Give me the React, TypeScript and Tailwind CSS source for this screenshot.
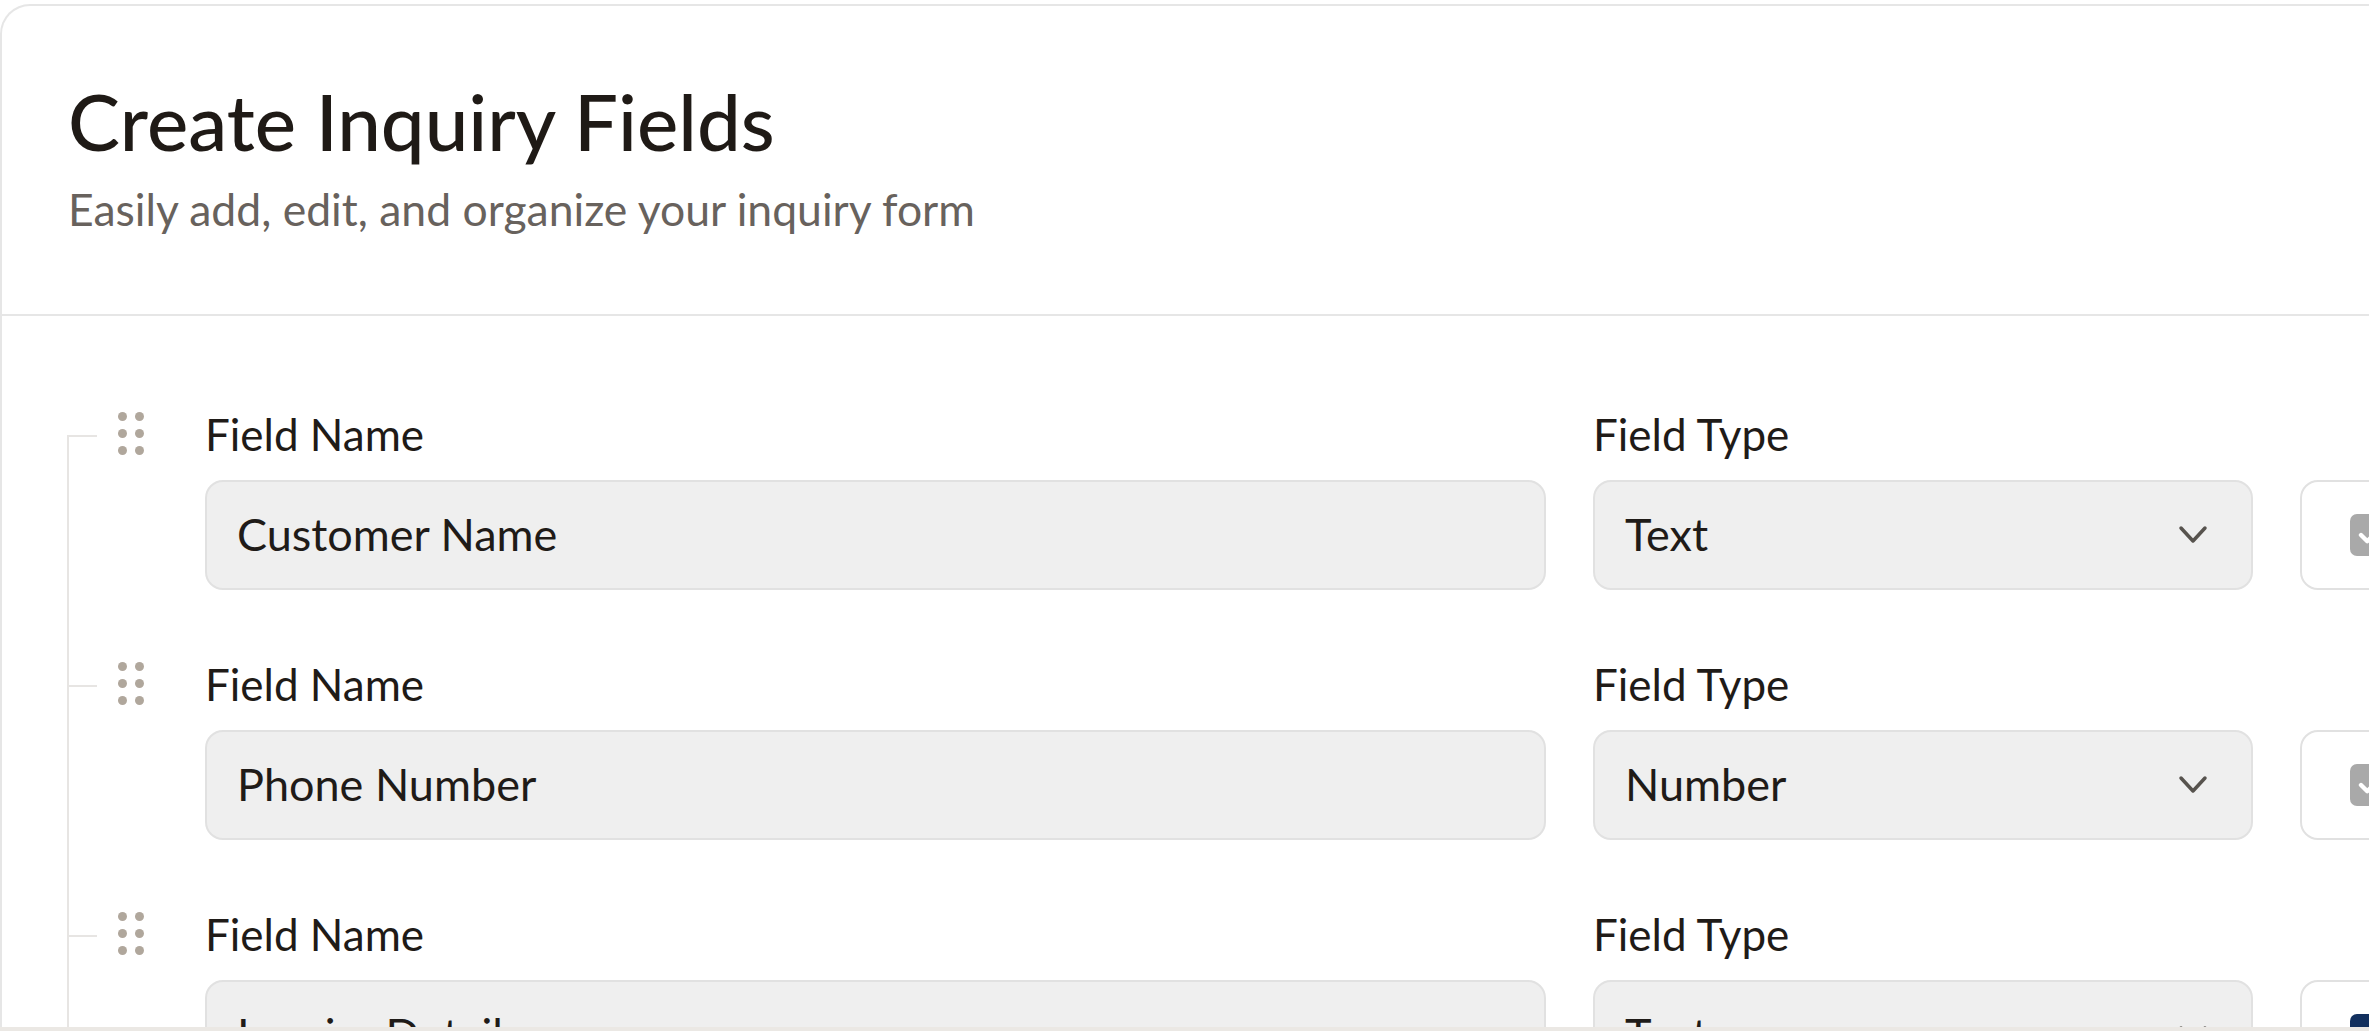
import { Check } from "lucide-react";

interface InquiryField {
    name: string;
    type: string;
    locked: boolean;
}

const fields: InquiryField[] = [
    { name: "Customer Name", type: "Text", locked: true },
    { name: "Phone Number", type: "Number", locked: true },
    { name: "Inquiry Details", type: "Text", locked: false },
];

const DragHandle = () => (
    <div className="grid grid-cols-2 gap-x-[8px] gap-y-[8px]">
        {Array.from({ length: 6 }).map((_, i) => (
            <span key={i} className="block h-[9px] w-[9px] rounded-full bg-[#b0a79c]" />
        ))}
    </div>
);

const Chevron = () => (
    <svg width="30" height="20" viewBox="0 0 30 20" fill="none" className="shrink-0">
        <path d="M3 3 L15 16 L27 3" stroke="#57534e" strokeWidth="3.5" strokeLinecap="round" strokeLinejoin="round" />
    </svg>
);

const FieldRow = ({ field, first }: { field: InquiryField; first: boolean }) => (
    <div className="flex">
        <div className="flex w-[30px] shrink-0 flex-col">
            <div className={first ? "h-[23px]" : "h-[23px] border-l-2 border-[#e7e5e3]"} />
            <div className="flex-1 border-l-2 border-t-2 border-[#e7e5e3]" />
        </div>
        <div className="ml-[21px] flex h-[44px] shrink-0 items-center">
            <DragHandle />
        </div>
        <div className="ml-[61px] flex gap-[47px] pb-[72px]">
            <div className="flex w-[1341px] shrink-0 flex-col gap-[24px]">
                <span className="text-[44px] leading-none text-[#1f1b18]">Field Name</span>
                <div className="flex h-[110px] items-center rounded-[18px] border-2 border-[#e1e1e1] bg-[#efefef] px-[30px] text-[45px] leading-none text-[#1f1b18]">
                    {field.name}
                </div>
            </div>
            <div className="flex w-[660px] shrink-0 flex-col gap-[24px]">
                <span className="text-[44px] leading-none text-[#1f1b18]">Field Type</span>
                <div className="flex h-[110px] items-center justify-between rounded-[18px] border-2 border-[#e1e1e1] bg-[#efefef] pl-[30px] pr-[43px] text-[45px] leading-none text-[#1f1b18]">
                    <span>{field.type}</span>
                    <Chevron />
                </div>
            </div>
            <div className="flex w-[220px] shrink-0 flex-col gap-[24px]">
                <span className="h-[44px]" />
                <div className="flex h-[110px] items-center rounded-[18px] border-2 border-[#e1e1e1] bg-white pl-[48px]">
                    <span
                        className={
                            field.locked
                                ? "flex h-[42px] w-[42px] items-center justify-center rounded-[7px] bg-[#a9a9a9]"
                                : "flex h-[42px] w-[42px] items-center justify-center rounded-[7px] bg-[#12305e]"
                        }
                    >
                        <Check size={30} strokeWidth={3.5} color="#ffffff" />
                    </span>
                </div>
            </div>
        </div>
    </div>
);

export default function App() {
    return (
        <div className="flex h-[1031px] flex-col overflow-hidden bg-white pt-[4px] font-['Lato','Noto_Sans',sans-serif]">
            <div className="min-h-0 w-[2460px] flex-1 overflow-hidden rounded-tl-[30px] border-l-2 border-t-2 border-[#e6e6e6] bg-white">
                <div className="border-b-2 border-[#e6e6e6] pb-[82px] pl-[66px] pt-[76px]">
                    <h1 className="text-[78px] font-medium leading-none text-[#1f1a16]">Create Inquiry Fields</h1>
                    <p className="mt-[27px] text-[44.5px] leading-none text-[#68625d]">
                        Easily add, edit, and organize your inquiry form
                    </p>
                </div>
                <div className="pl-[65px] pt-[96px]">
                    {fields.map((field, i) => (
                        <FieldRow key={field.name} field={field} first={i === 0} />
                    ))}
                </div>
            </div>
            <div className="h-[4px] shrink-0 bg-[#ebe8e4]" />
        </div>
    );
}
